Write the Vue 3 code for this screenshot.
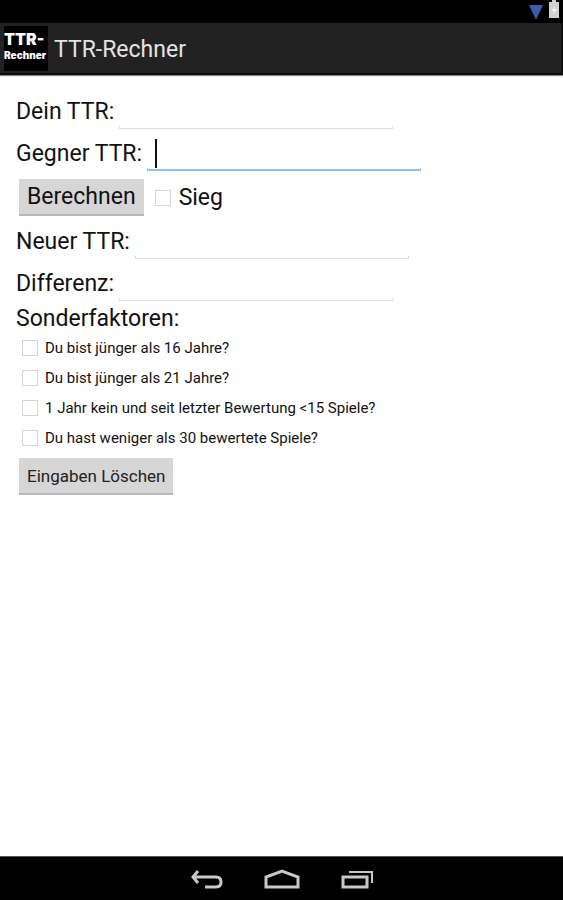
<template>
  <div class="screen">
    <div class="status-bar">
      <svg class="wifi" width="14" height="15" viewBox="0 0 14 15">
        <path d="M0 0h14L7 15z" fill="#3b5ea8" />
      </svg>
      <svg class="battery" width="10" height="18" viewBox="0 0 10 18">
        <path d="M3 0h4v2h3v16H0V2h3z" fill="#d0d0d0" />
        <path d="M6 5L3 11h2l-1 4 4-6H5z" fill="#f8f8f8" />
      </svg>
    </div>

    <header class="action-bar">
      <div class="logo">
        <span class="logo-top">TTR-</span>
        <span class="logo-bottom">Rechner</span>
      </div>
      <h1>TTR-Rechner</h1>
    </header>

    <main>
      <div class="row">
        <label for="dein">Dein TTR:</label>
        <div class="field">
          <input id="dein" v-model="dein" type="text" inputmode="numeric" />
        </div>
      </div>
      <div class="row">
        <label for="gegner">Gegner TTR:</label>
        <div class="field active">
          <input id="gegner" v-model="gegner" type="text" inputmode="numeric" />
          <span v-if="!gegner" class="caret"></span>
        </div>
      </div>
      <div class="row buttons">
        <button type="button" class="btn large" @click="berechnen">Berechnen</button>
        <div class="win">
          <input id="sieg" v-model="sieg" type="checkbox" />
          <label for="sieg">Sieg</label>
        </div>
      </div>
      <div class="row">
        <label for="neu">Neuer TTR:</label>
        <div class="field">
          <input id="neu" :value="neu" type="text" readonly />
        </div>
      </div>
      <div class="row">
        <label for="differenz">Differenz:</label>
        <div class="field">
          <input id="differenz" :value="differenz" type="text" readonly />
        </div>
      </div>

      <h2>Sonderfaktoren:</h2>
      <div v-for="f in faktoren" :key="f.id" class="factor">
        <input :id="f.id" v-model="f.aktiv" type="checkbox" />
        <label :for="f.id">{{ f.text }}</label>
      </div>
      <button type="button" class="btn" @click="loeschen">Eingaben Löschen</button>
    </main>

    <nav class="nav-bar">
      <button type="button" aria-label="Zurück">
        <svg width="34" height="22" viewBox="0 0 34 22">
          <path d="M8 3L3 9l5 6M3 9h23q5 0 5 5t-5 5H15" />
        </svg>
      </button>
      <button type="button" aria-label="Startseite">
        <svg width="36" height="22" viewBox="0 0 36 22">
          <path d="M2 19V9l16-6 16 6v10z" />
        </svg>
      </button>
      <button type="button" aria-label="Letzte Apps">
        <svg width="34" height="22" viewBox="0 0 34 22">
          <path d="M3 9h24v10H3z" />
          <path d="M9 4h23v11" class="thin" />
        </svg>
      </button>
    </nav>
  </div>
</template>

<script setup>
import { ref } from 'vue';

const dein = ref('');
const gegner = ref('');
const sieg = ref(false);
const neu = ref('');
const differenz = ref('');

const faktoren = ref([
  { id: 'u16', text: 'Du bist jünger als 16 Jahre?', bonus: 4, aktiv: false },
  { id: 'u21', text: 'Du bist jünger als 21 Jahre?', bonus: 4, aktiv: false },
  { id: 'pause', text: '1 Jahr kein und seit letzter Bewertung <15 Spiele?', bonus: 4, aktiv: false },
  { id: 'wenige', text: 'Du hast weniger als 30 bewertete Spiele?', bonus: 4, aktiv: false },
]);

function berechnen() {
  const a = Number(dein.value);
  const b = Number(gegner.value);
  if (!a || !b) return;
  let k = 16;
  faktoren.value.forEach((f) => {
    if (f.aktiv) k += f.bonus;
  });
  const erwartung = 1 / (1 + 10 ** ((b - a) / 150));
  const diff = Math.round(((sieg.value ? 1 : 0) - erwartung) * k);
  differenz.value = String(diff);
  neu.value = String(a + diff);
}

function loeschen() {
  dein.value = '';
  gegner.value = '';
  sieg.value = false;
  neu.value = '';
  differenz.value = '';
  faktoren.value.forEach((f) => {
    f.aktiv = false;
  });
}
</script>

<style>
body {
  margin: 0;
  background: #fff;
}
</style>

<style scoped>
.screen {
  display: flex;
  flex-direction: column;
  min-height: 100vh;
  font-family: Roboto, "Liberation Sans", sans-serif;
  color: #111;
}
.status-bar {
  display: flex;
  justify-content: flex-end;
  gap: 6px;
  height: 23px;
  padding-right: 4px;
  background: #000;
}
.wifi {
  margin-top: 5px;
}
.action-bar {
  display: flex;
  align-items: center;
  gap: 6px;
  height: 50px;
  padding-left: 4px;
  background: #222;
  border-right: 2px solid #111;
  border-bottom: 2px solid #0a0a0a;
  box-shadow: 0 1px 1px #888;
}
.logo {
  display: flex;
  flex-direction: column;
  box-sizing: border-box;
  width: 44px;
  height: 45px;
  padding-top: 7px;
  background: #000;
  color: #fff;
  font-family: Inter, "Open Sans", sans-serif;
  font-weight: 900;
}
.logo-top {
  font-size: 16px;
  line-height: 12px;
}
.logo-bottom {
  margin-top: 5px;
  font-size: 10px;
  line-height: 10px;
}
h1 {
  margin: 0;
  padding-top: 4px;
  font-size: 23px;
  line-height: 28px;
  font-weight: 400;
  color: #e4e4e4;
}
main {
  flex: 1;
  padding: 12px 16px;
}
.row {
  display: flex;
  align-items: center;
  gap: 5px;
  height: 42px;
  font-size: 23px;
  line-height: 28px;
}
.row > label {
  padding-top: 8px;
}
.field {
  position: relative;
  width: 274px;
}
.field input {
  display: block;
  box-sizing: border-box;
  width: 100%;
  height: 42px;
  padding: 8px 8px 0;
  border: 0;
  outline: none;
  background: transparent;
  font: inherit;
  color: inherit;
}
.field::after {
  content: '';
  position: absolute;
  left: 0;
  right: 0;
  bottom: 0;
  height: 3px;
  border: 1px solid #ddd;
  border-top: 0;
  box-sizing: border-box;
}
.field.active::after {
  border-color: #8fc3e4;
  border-bottom-width: 2px;
}
.caret {
  position: absolute;
  left: 8px;
  top: 10px;
  width: 2px;
  height: 29px;
  background: #111;
}
.buttons {
  align-items: flex-start;
  gap: 11px;
  height: 46px;
  padding-left: 3px;
}
.win {
  display: flex;
  align-items: center;
  gap: 8px;
  height: 37px;
  margin-top: 8px;
}
input[type='checkbox'] {
  appearance: none;
  box-sizing: border-box;
  flex: none;
  width: 16px;
  height: 16px;
  margin: 0;
  border: 1px solid #d4d4d4;
  background: #fff;
}
input[type='checkbox']:checked {
  background: #7db8de;
}
.btn {
  display: block;
  height: 37px;
  margin: 5px 0 0 3px;
  padding: 0 8px;
  border: 0;
  border-bottom: 2px solid #b8b8b8;
  background: #d6d6d6;
  font-family: inherit;
  font-size: 17px;
  color: #222;
}
.btn.large {
  margin: 8px 0 0;
  font-size: 23px;
  color: #111;
}
h2 {
  margin: 0;
  padding-top: 4px;
  font-size: 23px;
  line-height: 28px;
  font-weight: 400;
}
.factor {
  display: flex;
  align-items: center;
  gap: 7px;
  height: 30px;
  padding-left: 6px;
  font-size: 15px;
}
.nav-bar {
  display: flex;
  justify-content: center;
  gap: 40px;
  height: 43px;
  border-top: 1px solid #555;
  background: #000;
}
.nav-bar button {
  display: flex;
  align-items: center;
  padding: 0;
  border: 0;
  background: none;
}
.nav-bar path {
  fill: none;
  stroke: #c8c8c8;
  stroke-width: 3;
}
.nav-bar .thin {
  stroke-width: 2;
}
</style>
